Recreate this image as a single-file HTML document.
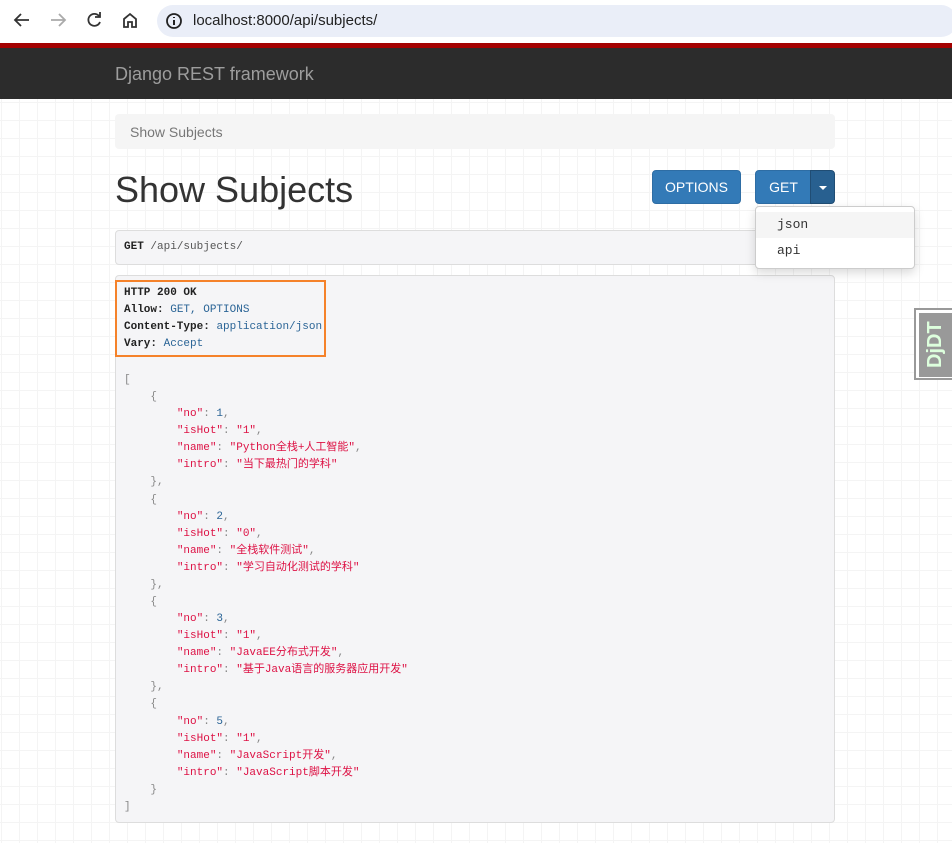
<!DOCTYPE html>
<html><head><meta charset="utf-8"><style>
*{box-sizing:border-box;margin:0;padding:0}
body{width:952px;height:843px;overflow:hidden;font-family:"Liberation Sans",sans-serif;background:#fff;position:relative}
.chrome{height:43px;background:#fff;position:relative}
.url{position:absolute;left:157px;top:5px;width:800px;height:32px;border-radius:16px;background:#eaeef8;}
.url span{position:absolute;left:36px;top:7px;font-size:15px;color:#222}
.red{height:5px;background:#a30000}
.nav{height:51px;background:#2c2c2c;color:#9d9d9d;font-size:18px;padding:16px 0 0 115px}
.page{position:absolute;top:99px;left:0;width:952px;height:744px;background-color:#fff;background-image:linear-gradient(#f4f4f4 1px,transparent 1px),linear-gradient(90deg,#f4f4f4 1px,transparent 1px);background-size:18px 18px;background-position:1px 3px}
.bc{position:absolute;left:115px;top:15px;width:720px;height:35px;background:#f5f5f5;border-radius:4px;color:#777;font-size:14px;padding:10px 15px}
h1{position:absolute;left:115px;top:70px;font-weight:normal;font-size:36px;color:#333}
.btn{position:absolute;top:71px;height:34px;background:#337ab7;border:1px solid #2e6da4;border-radius:4px;color:#fff;font-size:14px;text-align:center;line-height:32px}
.caret{position:absolute;left:810px;top:71px;width:25px;height:34px;background:#286090;border-radius:0 4px 4px 0;border:1px solid #204d74}
.caret:after{content:"";position:absolute;left:8px;top:15px;border-left:4px solid transparent;border-right:4px solid transparent;border-top:4px solid #fff}
.dd{position:absolute;left:755px;top:107px;width:160px;height:63px;background:#fff;border:1px solid #ccc;border-radius:4px;box-shadow:0 4px 10px rgba(0,0,0,.15);font-family:"Liberation Mono",monospace;font-size:13px;color:#333}
.dd div{height:26px;padding:5px 21px}
.mono{font-family:"Liberation Mono","Noto Sans CJK SC",monospace;font-size:11px}
.req{position:absolute;left:115px;top:131px;width:720px;height:35px;background:#f5f5f7;border:1px solid #ddd;border-radius:4px;padding:10px 8px;color:#333}
.resp{position:absolute;left:115px;top:176px;width:720px;height:548px;background:#f5f5f7;border:1px solid #ddd;border-radius:4px;color:#333}
.hdr{position:absolute;left:-1px;top:4px;width:211px;height:77px;border:2px solid #f5822a;padding:3px 0 0 7px;line-height:17px}
pre{position:absolute;left:8px;top:96px;line-height:17.08px;font-family:"Liberation Mono","Noto Sans CJK SC",monospace;font-size:11px;color:#888}
.k{color:#d14;}.s{color:#d14}.n{color:#2a6496}.b{color:#2a6496}
b{font-weight:bold;color:#222}
.djdt{position:absolute;right:0;top:308px;width:38px;height:72px;background:#fff;border:2px solid #999;border-right:none}
.djdt div{position:absolute;left:3px;top:3px;width:35px;height:64px;background:#999;color:#dfd;font-weight:bold;font-size:20px;writing-mode:vertical-rl;transform:rotate(180deg);text-align:center;line-height:33px}
</style></head><body>
<div class="chrome">
<svg width="150" height="43" style="position:absolute;left:0;top:0" fill="none" stroke-width="1.8">
<path d="M29 20H15M21 14l-6 6 6 6" stroke="#333"/>
<path d="M51 20h14M59 14l6 6-6 6" stroke="#aaa"/>
<path d="M99 16a6 6 0 1 0 1 6M100 12v5h-5" stroke="#333"/>
<path d="M124 19l6-5 6 5v8h-4v-5h-4v5h-4z" stroke="#333"/>
</svg>
<div class="url"><svg width="20" height="20" style="position:absolute;left:7px;top:6px"><circle cx="10" cy="10" r="7" stroke="#222" stroke-width="1.8" fill="none"/><path d="M10 9v5M10 6v1" stroke="#222" stroke-width="2"/></svg><span>localhost:8000/api/subjects/</span></div>
</div>
<div class="red"></div>
<div class="nav">Django REST framework</div>
<div class="page">
<div class="bc">Show Subjects</div>
<h1>Show Subjects</h1>
<div class="btn" style="left:652px;width:89px">OPTIONS</div>
<div class="btn" style="left:755px;width:57px;border-radius:4px 0 0 4px">GET</div>
<div class="caret"></div>
<div class="req mono"><b>GET</b> <span style="color:#555">/api/subjects/</span></div>
<div class="resp mono">
<div class="hdr"><b>HTTP 200 OK</b><br><b>Allow:</b> <span class="b">GET, OPTIONS</span><br><b>Content-Type:</b> <span class="b">application/json</span><br><b>Vary:</b> <span class="b">Accept</span></div>
<pre>[
    {
        <span class="k">"no"</span>: <span class="n">1</span>,
        <span class="k">"isHot"</span>: <span class="s">"1"</span>,
        <span class="k">"name"</span>: <span class="s">"Python全栈+人工智能"</span>,
        <span class="k">"intro"</span>: <span class="s">"当下最热门的学科"</span>
    },
    {
        <span class="k">"no"</span>: <span class="n">2</span>,
        <span class="k">"isHot"</span>: <span class="s">"0"</span>,
        <span class="k">"name"</span>: <span class="s">"全栈软件测试"</span>,
        <span class="k">"intro"</span>: <span class="s">"学习自动化测试的学科"</span>
    },
    {
        <span class="k">"no"</span>: <span class="n">3</span>,
        <span class="k">"isHot"</span>: <span class="s">"1"</span>,
        <span class="k">"name"</span>: <span class="s">"JavaEE分布式开发"</span>,
        <span class="k">"intro"</span>: <span class="s">"基于Java语言的服务器应用开发"</span>
    },
    {
        <span class="k">"no"</span>: <span class="n">5</span>,
        <span class="k">"isHot"</span>: <span class="s">"1"</span>,
        <span class="k">"name"</span>: <span class="s">"JavaScript开发"</span>,
        <span class="k">"intro"</span>: <span class="s">"JavaScript脚本开发"</span>
    }
]</pre>
</div>
<div class="dd"><div style="background:#f5f5f5;margin-top:5px">json</div><div>api</div></div>
</div>
<div class="djdt"><div>DjDT</div></div>
</body></html>
